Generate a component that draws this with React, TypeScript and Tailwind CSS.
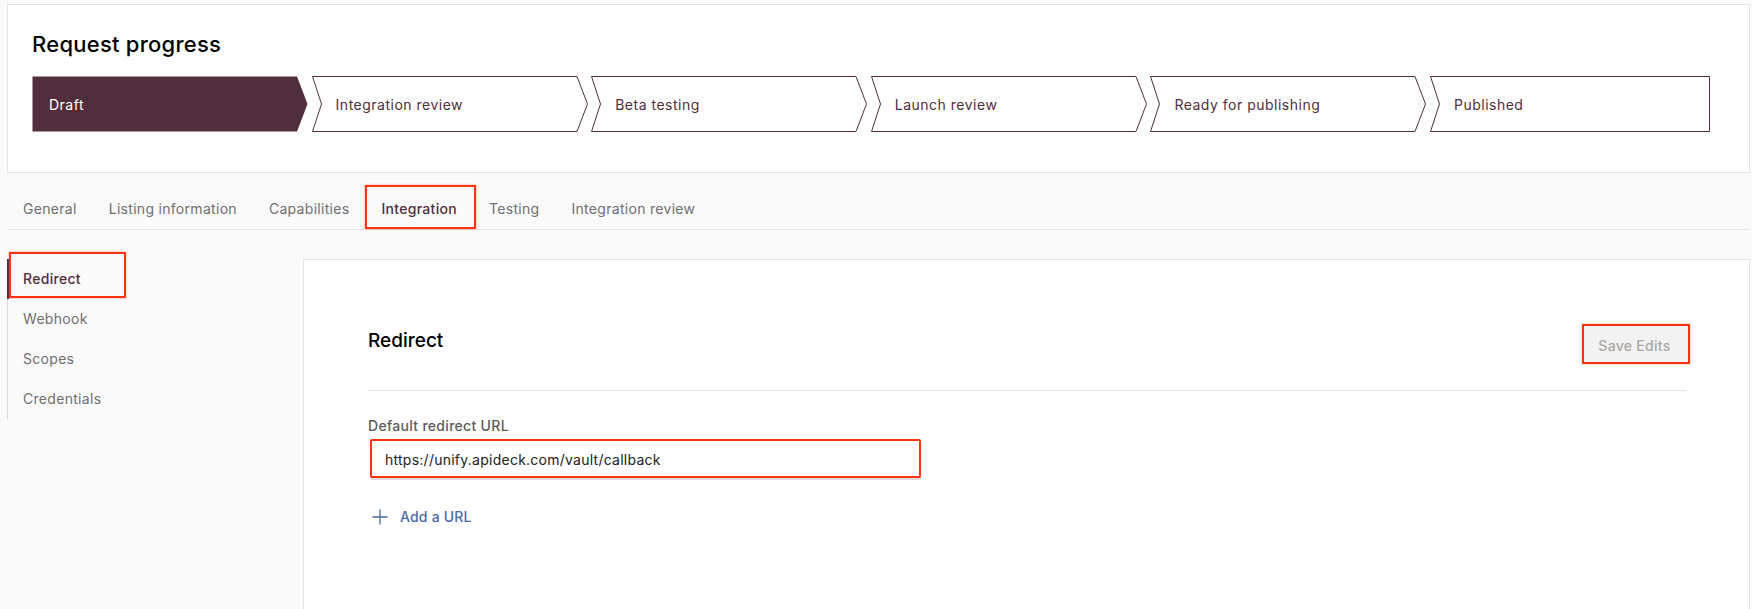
const steps = ['Draft', 'Integration review', 'Beta testing', 'Launch review', 'Ready for publishing', 'Published'];
const tabs = ['General', 'Listing information', 'Capabilities', 'Integration', 'Testing', 'Integration review'];
const sideItems = ['Redirect', 'Webhook', 'Scopes', 'Credentials'];

function Step({ label, index }: { label: string; index: number }) {
  const first = index === 0;
  const last = index === steps.length - 1;
  // chevron outline, drawn to the box of the step
  const w = last ? 280 : 276;
  const points = first
    ? `0.5,0.5 ${w - 11},0.5 ${w - 0.5},28 ${w - 11},55.5 0.5,55.5`
    : last
      ? `0.5,0.5 ${w - 0.5},0.5 ${w - 0.5},55.5 0.5,55.5 9.5,28`
      : `0.5,0.5 ${w - 11},0.5 ${w - 0.5},28 ${w - 11},55.5 0.5,55.5 9.5,28`;
  return (
    <div className={`relative h-14 flex items-center ${last ? 'w-[280px]' : 'w-[275.6px]'} ${first ? 'pl-[17px] text-white' : 'pl-[24px] text-[#512e3e]'}`}>
      <svg className="absolute inset-0" width={w} height={56} viewBox={`0 0 ${w} 56`}>
        <polygon points={points} fill={first ? '#512e3e' : '#ffffff'} stroke="#512e3e" strokeWidth={first ? 0 : 1} />
      </svg>
      <span className="relative text-sm pt-px tracking-[0.5px]">{label}</span>
    </div>
  );
}

export default function App() {
  return (
    <div className="h-[609px] overflow-hidden bg-[#fafafa] pt-1 pl-[7px] pr-[2px] font-['Inter',sans-serif]">
      <div className="h-[169px] bg-white border border-[#e3e3e3] pl-[24px] pt-[25px]">
        <h1 className="text-[22px] leading-[28px] font-medium tracking-[0.25px] text-black">Request progress</h1>
        <div className="mt-[18px] flex gap-[4px]">
          {steps.map((s, i) => (
            <Step key={s} label={s} index={i} />
          ))}
        </div>
      </div>

      <div className="flex h-[57px] items-end border-b border-[#e3e3e3]">
        {tabs.map((t) => (
          <div
            key={t}
            className={`relative pb-[3px] h-[37px] flex items-center text-sm tracking-[0.3px] mx-4 ${t === 'Integration' ? 'font-medium text-[#512e3e]' : 'text-[#6f6f6f]'}`}
          >
            {t}
            {t === 'Integration' && (
              <div className="absolute left-[-16px] right-[-19px] top-[-7px] bottom-0 border-2 border-[#fb3411] shadow-[0_0_2px_rgba(251,52,17,0.5)]" />
            )}
          </div>
        ))}
      </div>

      <div className="flex mt-[29px]">
        <div className="w-[296px] shrink-0">
          <div className="border-l border-[#d9d9d9]">
            {sideItems.map((item, i) => (
              <div
                key={item}
                className={`relative h-10 flex items-center pl-[15px] text-sm tracking-[0.3px] ${i === 0 ? 'font-medium text-[#512e3e]' : 'text-[#6f6f6f]'}`}
              >
                {i === 0 && <div className="absolute left-[-1px] top-0 bottom-0 w-[2px] bg-[#512e3e]" />}
                {item}
                {i === 0 && (
                  <div className="absolute left-[1px] top-[-7px] w-[117px] h-[46px] border-2 border-[#fb3411] shadow-[0_0_2px_rgba(251,52,17,0.5)]" />
                )}
              </div>
            ))}
          </div>
        </div>

        <div className="flex-1 h-[400px] bg-white border border-[#e3e3e3] pl-[64px] pr-[63px] pt-[64px]">
          <div className="flex justify-between items-start border-b border-[#e3e3e3] pb-[26px]">
            <h2 className="mt-[5px] text-[19px] leading-6 font-medium text-black">Redirect</h2>
            <button className="mr-[-4px] w-[108px] h-10 pt-[3px] pr-[3px] border-2 border-[#fb3411] bg-[#f2f2f2] text-sm font-medium tracking-[0.3px] text-[#a8a8a8] shadow-[0_0_2px_rgba(251,52,17,0.5)]">
              Save Edits
            </button>
          </div>

          <div className="mt-[25px] text-sm leading-5 font-medium tracking-[0.3px] text-[#5c5c5c]">Default redirect URL</div>
          <div className="mt-[3px] ml-[2px] w-[551px] h-[39px] flex items-center pl-[13px] pt-[2px] border-2 border-[#fb3411] rounded-[2px] shadow-[0_2px_0_#dcdcdc] text-sm tracking-[0.25px] text-[#222222]">
            https://unify.apideck.com/vault/callback
          </div>

          <div className="mt-[29px] ml-[3px] flex items-center gap-[11px] h-5 text-sm font-medium tracking-[0.2px] text-[#4a6aa8]">
            <svg width="18" height="18" viewBox="0 0 18 18" fill="none" stroke="#4a6aa8" strokeWidth="1.3">
              <path d="M9 1.5V16.5M1.5 9H16.5" />
            </svg>
            Add a URL
          </div>
        </div>
      </div>
    </div>
  );
}
